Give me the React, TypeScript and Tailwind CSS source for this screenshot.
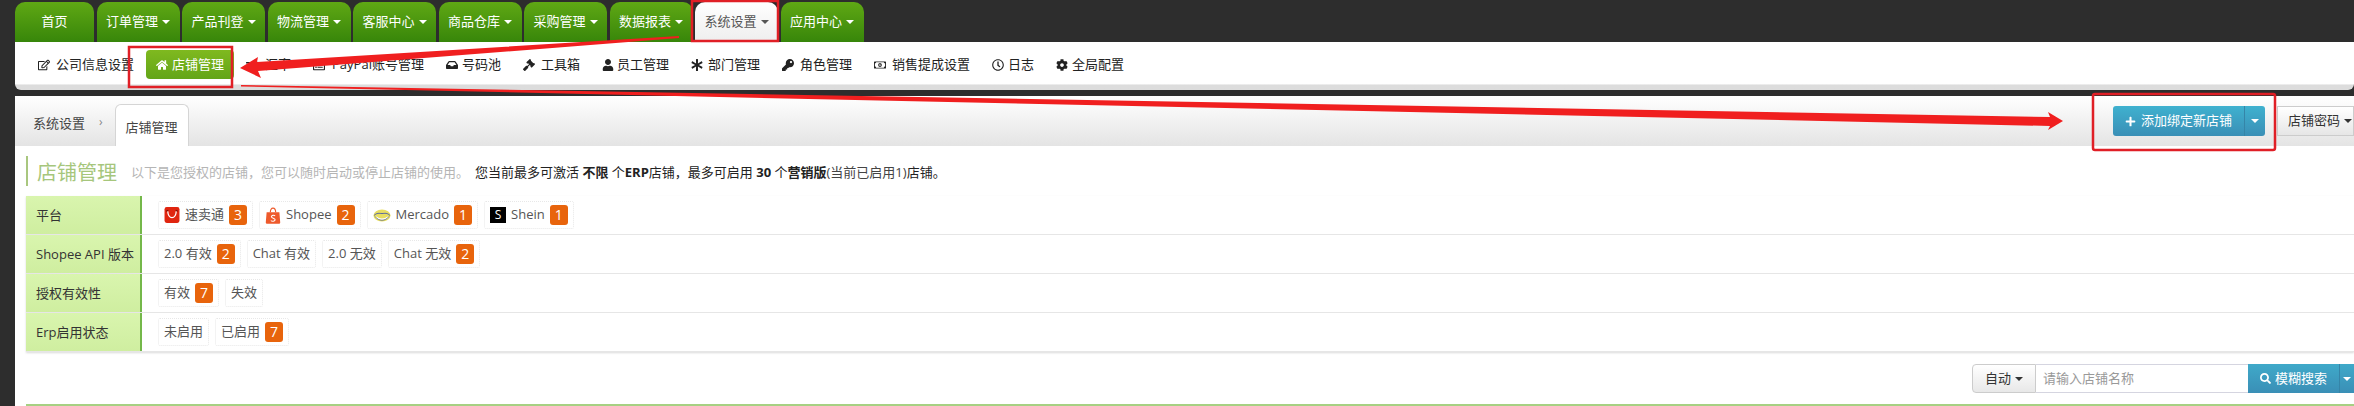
import React from "react";
import { FaRegEdit, FaHome, FaExchangeAlt, FaRegListAlt, FaInbox, FaGavel, FaUser, FaAsterisk, FaKey, FaRegMoneyBillAlt, FaRegClock, FaCog, FaPlus, FaSearch } from "react-icons/fa";

const Caret = ({ className }: { className: string }) => (
  <span className={`inline-block w-0 h-0 border-x-[4px] border-x-transparent border-t-[4px] ${className}`} />
);

const tabs = ["首页", "订单管理", "产品刊登", "物流管理", "客服中心", "商品仓库", "采购管理", "数据报表", "系统设置", "应用中心"];

const subItems: [React.ReactNode, string, string][] = [
  [<FaRegEdit />, "公司信息设置", "w-[18px]"],
  [<FaHome />, "店铺管理", "w-[16px]"],
  [<FaExchangeAlt />, "汇率", "w-[19px]"],
  [<FaRegListAlt />, "PayPal账号管理", "w-[19px]"],
  [<FaInbox />, "号码池", "w-[16px]"],
  [<FaGavel />, "工具箱", "w-[18px]"],
  [<FaUser />, "员工管理", "w-[15px]"],
  [<FaAsterisk />, "部门管理", "w-[17px]"],
  [<FaKey />, "角色管理", "w-[18px]"],
  [<FaRegMoneyBillAlt />, "销售提成设置", "w-[18px]"],
  [<FaRegClock />, "日志", "w-[16px]"],
  [<FaCog />, "全局配置", "w-[16px]"],
];

const Ali = () => (
  <svg width="16" height="16" viewBox="0 0 14 15" className="shrink-0">
    <rect width="14" height="15" rx="2" fill="#e0250f" />
    <path d="M3 4c.3 4 2 6 4 6s3.700-2 4-6" fill="none" stroke="#fff" strokeWidth="1.200" />
    <path d="M1.500 4l2-1M12.500 4l-2-1" stroke="#7a1206" strokeWidth="1" />
  </svg>
);
const ShopeeLogo = () => (
  <svg width="16" height="17" viewBox="0 0 14 16" className="shrink-0">
    <path d="M1 5h12l.8 9.500a1.200 1.200 0 0 1-1.200 1.300H1.400A1.200 1.200 0 0 1 .2 14.500z" fill="#ee5a2c" />
    <path d="M4.500 5C4.500 2.500 5.500 1 7 1s2.500 1.500 2.500 4" fill="none" stroke="#ee5a2c" strokeWidth="1.100" />
    <path d="M9 8.300C8 7.500 5.500 7.700 5.500 9.200S9 10.500 9 12s-3 1.800-4 .7" fill="none" stroke="#fff" strokeWidth="1" />
  </svg>
);
const Mercado = () => (
  <svg width="18" height="13" viewBox="0 0 18 13" className="shrink-0">
    <ellipse cx="9" cy="6.500" rx="8.500" ry="6" fill="#e8de60" />
    <path d="M1 6.500c3-3 5-2 8-2s5-1 8 2" fill="none" stroke="#5a6aa0" strokeWidth="1" />
    <path d="M3 8c3 3 9 3 12 0" fill="none" stroke="#fff" strokeWidth="1.500" />
    <path d="M2 7.500c4 5 10 5 14 0" fill="none" stroke="#4a5a90" strokeWidth=".7" />
  </svg>
);
const SheinLogo = () => (
  <span className="w-[16px] h-[16px] bg-black text-white text-[12px] leading-[16px] text-center shrink-0">S</span>
);

const Badge = ({ n }: { n: number }) => (
  <span className="w-[18px] h-[20px] rounded-[3px] bg-[#e8640c] text-white text-[14px] leading-[20px] text-center shrink-0">{n}</span>
);

const Tag = ({ label, n, icon }: { label: string; n?: number; icon?: React.ReactNode }) => (
  <span className="h-[28px] px-[5px] flex items-center gap-[5px] border border-dotted border-[#e8e8e8] text-[#555] text-[13px] rounded-[2px] whitespace-nowrap">
    {icon}
    <span>{label}</span>
    {n !== undefined && <Badge n={n} />}
  </span>
);

const Row = ({ label, children }: { label: string; children: React.ReactNode }) => (
  <div className="h-[39px] flex border-b border-[#e6e6e6]">
    <div className="w-[116px] pl-[10px] pt-[2px] flex items-center text-[13px] text-[#333] bg-gradient-to-b from-[#d9f5ae] to-[#cfeea0] border-r-2 border-[#74b84a] whitespace-nowrap">{label}</div>
    <div className="flex items-center gap-[6px] pl-[16px]">{children}</div>
  </div>
);

export default function App() {
  return (
    <div className="relative w-[2354px] h-[406px] overflow-hidden bg-[#2d2d2d] pl-[15px] font-['Open_Sans','Noto_Sans_CJK_SC',sans-serif] text-[13px]">
      {/* main tabs */}
      <div className="flex h-[42px] pt-[2px] gap-[2.5px]">
        {tabs.map((t, i) => {
          const active = t === "系统设置";
          return (
            <div
              key={t}
              className={
                (i === 0 ? "w-[79px] " : "w-[83px] ") +
                "h-[40px] rounded-t-[10px] flex items-center justify-center gap-[4px] text-[13px] " +
                (active
                  ? "bg-gradient-to-b from-white to-[#eeeeee] text-[#555]"
                  : "bg-gradient-to-b from-[#5fa814] to-[#37860a] text-white")
              }
            >
              {t}
              {i > 0 && <Caret className={active ? "border-t-[#555]" : "border-t-white"} />}
            </div>
          );
        })}
      </div>

      {/* sub nav */}
      <div className="h-[48px] rounded-b-[6px] bg-gradient-to-b from-white from-[88%] to-[#dcdcdc] to-[89%] flex items-start gap-[2px] pl-[13px] pt-[8px] text-[#222]">
        {subItems.map(([icon, label, iconBox]) => {
          const active = label === "店铺管理";
          return (
            <div
              key={label}
              className={
                "h-[29px] px-[10px] flex items-center rounded-[4px] whitespace-nowrap " +
                (active ? "bg-gradient-to-b from-[#7fb91f] to-[#63a518] text-white" : "")
              }
            >
              <span className={`${iconBox} text-[12px] flex justify-start shrink-0`}>{icon}</span>
              {label}
            </div>
          );
        })}
      </div>

      {/* dark gap */}
      <div className="h-[6px]" />

      {/* panel */}
      <div className="h-[310px] bg-white rounded-tl-[6px]">
        <div className="h-[50px] bg-gradient-to-b from-white to-[#e4e4e4] flex items-end justify-between">
          <div className="flex items-end h-full">
            <span className="ml-[18px] mb-[13px] text-[#444]">系统设置</span>
            <span className="ml-[14px] mb-[15px] text-[#888] text-[12px]">›</span>
            <span className="ml-[12px] w-[74px] h-[42px] bg-white border border-b-0 border-[#d5d5d5] rounded-t-[6px] flex items-center justify-center pt-[4px] text-[#444]">店铺管理</span>
          </div>
          <div className="flex h-full pt-[10px] gap-[12px]">
            <div className="flex h-[30px] w-[152px] rounded-[3px] overflow-hidden text-white bg-gradient-to-b from-[#3fb1cf] to-[#3a8fb6]">
              <span className="w-[132px] flex items-center justify-center gap-[5px] border-r border-[#3585a8]"><FaPlus className="text-[11px]" />添加绑定新店铺</span>
              <span className="flex-1 flex items-center justify-center"><Caret className="border-t-white" /></span>
            </div>
            <div className="flex h-[30px] w-[77px] shrink-0 items-center gap-[4px] pl-[10px] border border-[#cccccc] bg-gradient-to-b from-white to-[#e6e6e6] text-[#333] whitespace-nowrap">
              店铺密码 <Caret className="border-t-[#333]" />
            </div>
          </div>
        </div>

        <div className="pl-[11px]">
          <div className="mt-[10px] h-[30px] border-l-2 border-[#a9c77f] pl-[9px] pt-[3px] flex items-center whitespace-nowrap">
            <span className="text-[20px] text-[#a6c67c]">店铺管理</span>
            <span className="ml-[14px] text-[#b5b5b5]">以下是您授权的店铺，您可以随时启动或停止店铺的使用。</span>
            <span className="ml-[6px] text-[#222]">您当前最多可激活 <b>不限</b> 个<b>ERP</b>店铺，最多可启用 <b>30</b> 个<b>营销版</b><span className="text-[#444]">(当前已启用1)</span>店铺。</span>
          </div>

          <div className="mt-[10px] shadow-[0_1px_2px_rgba(0,0,0,0.15)]">
            <Row label="平台">
              <Tag icon={<Ali />} label="速卖通" n={3} />
              <Tag icon={<ShopeeLogo />} label="Shopee" n={2} />
              <Tag icon={<Mercado />} label="Mercado" n={1} />
              <Tag icon={<SheinLogo />} label="Shein" n={1} />
            </Row>
            <Row label="Shopee API 版本">
              <Tag label="2.0 有效" n={2} />
              <Tag label="Chat 有效" />
              <Tag label="2.0 无效" />
              <Tag label="Chat 无效" n={2} />
            </Row>
            <Row label="授权有效性">
              <Tag label="有效" n={7} />
              <Tag label="失效" />
            </Row>
            <Row label="Erp启用状态">
              <Tag label="未启用" />
              <Tag label="已启用" n={7} />
            </Row>
          </div>

          <div className="mt-[12px] flex justify-end">
            <div className="flex h-[29px]">
              <div className="w-[64px] flex items-center justify-center gap-[4px] border border-[#cccccc] rounded-l-[4px] bg-gradient-to-b from-white to-[#e8e8e8] text-[#333]">
                自动 <Caret className="border-t-[#333]" />
              </div>
              <div className="w-[212px] flex items-center pl-[7px] border-y border-[#d5d5e0] text-[#999]">请输入店铺名称</div>
              <div className="w-[106px] flex text-white bg-gradient-to-b from-[#3fa9c9] to-[#3a8fb6]">
                <span className="w-[92px] flex items-center justify-center gap-[4px] border-r border-[#3585a8]"><FaSearch className="text-[11px]" />模糊搜索</span>
                <span className="flex-1 flex items-center justify-center"><Caret className="border-t-white" /></span>
              </div>
            </div>
          </div>

          <div className="mt-[11px] h-[2px] bg-[#a6d082]" />
        </div>
      </div>

      {/* red annotations */}
      <svg width="2354" height="406" className="absolute left-0 top-0 pointer-events-none">
        <g fill="none" stroke="#e01f26" strokeWidth="2.500">
          <rect x="692" y="1" width="86" height="40" />
          <rect x="129" y="47" width="103" height="40" />
          <rect x="2093" y="94" width="182" height="56" rx="2" />
        </g>
        <polygon points="240,68 258,57 257,62 679,36 679,38 258,71 261,78" fill="#f01f1f" />
        <polygon points="241,85 2050,117 2048,112 2063,121 2048,130 2050,126 241,86.500" fill="#f01f1f" />
      </svg>
    </div>
  );
}
